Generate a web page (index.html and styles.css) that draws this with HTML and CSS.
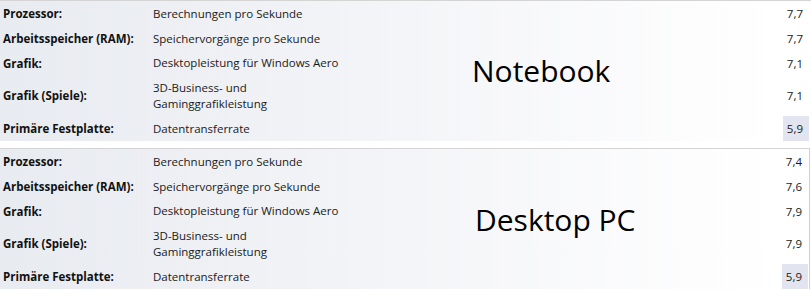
FILE: index.html
```html
<!DOCTYPE html>
<html lang="de">
<head>
<meta charset="utf-8">
<title>Leistungsindex</title>
<link rel="stylesheet" href="styles.css">
</head>
<body>
<div class="report">
  <section class="panel panel-top">
    <div class="row"><span class="label">Prozessor:</span><span class="desc">Berechnungen pro Sekunde</span><span class="score">7,7</span></div>
    <div class="row"><span class="label">Arbeitsspeicher (RAM):</span><span class="desc">Speichervorgänge pro Sekunde</span><span class="score">7,7</span></div>
    <div class="row row-short"><span class="label">Grafik:</span><span class="desc">Desktopleistung für Windows Aero</span><span class="score">7,1</span></div>
    <div class="row row-tall"><span class="label">Grafik (Spiele):</span><span class="desc">3D-Business- und<br>Gaminggrafikleistung</span><span class="score">7,1</span></div>
    <div class="row row-low"><span class="label">Primäre Festplatte:</span><span class="desc">Datentransferrate</span><span class="score">5,9</span></div>
    <div class="caption caption-notebook">Notebook</div>
  </section>
  <section class="panel panel-bottom">
    <div class="row"><span class="label">Prozessor:</span><span class="desc">Berechnungen pro Sekunde</span><span class="score">7,4</span></div>
    <div class="row"><span class="label">Arbeitsspeicher (RAM):</span><span class="desc">Speichervorgänge pro Sekunde</span><span class="score">7,6</span></div>
    <div class="row row-short"><span class="label">Grafik:</span><span class="desc">Desktopleistung für Windows Aero</span><span class="score">7,9</span></div>
    <div class="row row-tall"><span class="label">Grafik (Spiele):</span><span class="desc">3D-Business- und<br>Gaminggrafikleistung</span><span class="score">7,9</span></div>
    <div class="row row-low"><span class="label">Primäre Festplatte:</span><span class="desc">Datentransferrate</span><span class="score">5,9</span></div>
    <div class="caption caption-desktop">Desktop PC</div>
  </section>
</div>
</body>
</html>
```
FILE: styles.css
```css
* { box-sizing: border-box; }
html, body { margin: 0; padding: 0; background: #ffffff; }
body {
  width: 811px;
  height: 290px;
  overflow: hidden;
  font-family: "Open Sans", "Noto Sans", sans-serif;
  font-size: 11.5px;
  color: #1a1a1a;
}
.report {
  display: flex;
  flex-direction: column;
  gap: 7px;
}
.panel {
  position: relative;
  display: flex;
  flex-direction: column;
  border-top: 1px solid #d4d4d4;
  background: linear-gradient(90deg, #e8ebf0 0%, #f4f5f8 50%, #ffffff 96%);
}
.panel-top { padding-right: 2px; }
.panel-bottom {
  border-right: 1px solid #d0d0d0;
  margin-right: 1px;
  padding-right: 1px;
}
.row {
  display: grid;
  grid-template-columns: 150px 1fr 26px;
  align-items: center;
  height: 25px;
}
.row-short { height: 24px; }
.row-tall { height: 41px; }
.label {
  padding-left: 3px;
  font-weight: 700;
  color: #111;
}
.desc {
  padding-left: 3px;
  line-height: 16px;
}
.score {
  align-self: stretch;
  display: flex;
  align-items: center;
  justify-content: flex-end;
  padding-right: 6px;
}
.row-low .score { background: #e2e5ef; }
.caption {
  position: absolute;
  font-size: 30px;
  line-height: 1;
  color: #000;
}
.caption-notebook { left: 472px; top: 55px; }
.caption-desktop { left: 475px; top: 56px; }
```
